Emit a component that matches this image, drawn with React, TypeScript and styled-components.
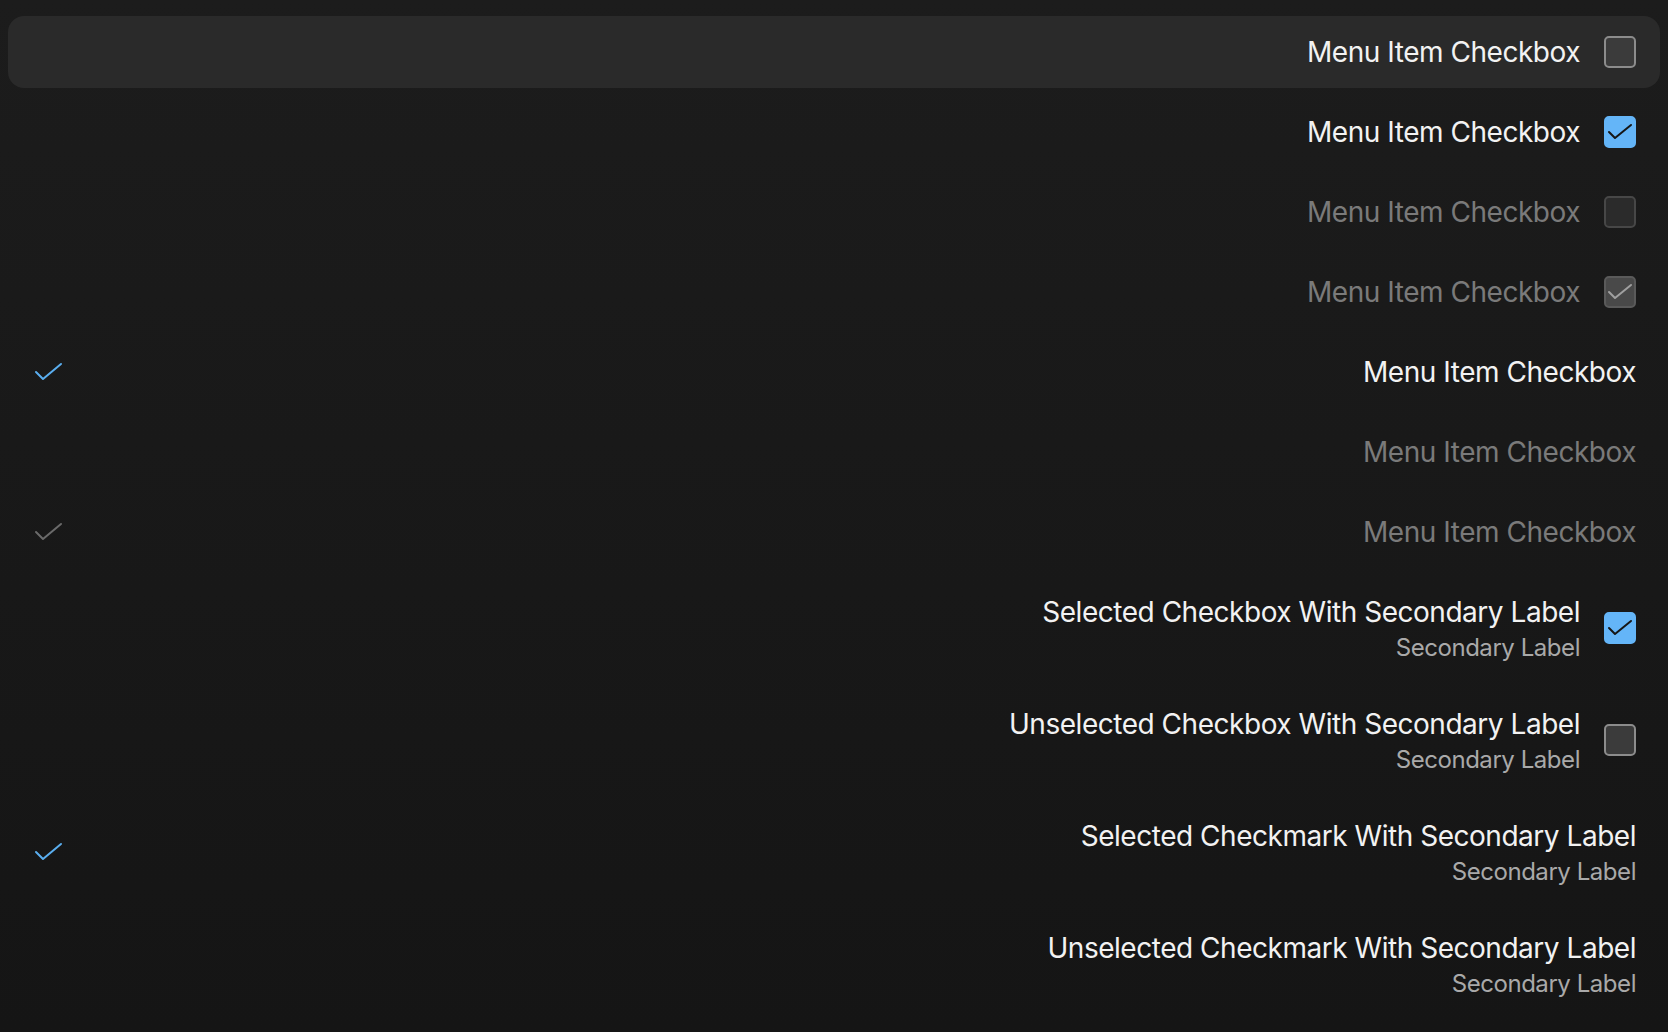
import styled, { createGlobalStyle } from 'styled-components';

const GlobalStyle = createGlobalStyle`
  html, body {
    margin: 0;
    padding: 0;
    background: #181818;
  }
  body {
    font-family: Inter, "Noto Sans", sans-serif;
  }
`

const Page = styled.div`
    min-height: 1032px;
    box-sizing: border-box;
    padding: 16px 8px;
    display: flex;
    flex-direction: column;
    gap: 8px;
    background: linear-gradient(180deg, #1c1c1c 0%, #151515 100%);
`
const Row = styled.div<{ $highlighted?: boolean }>`
    display: flex;
    align-items: center;
    justify-content: space-between;
    padding: 16px 24px;
    border-radius: 16px;
    background: ${p => p.$highlighted ? '#2a2a2a' : 'transparent'};
`
const Lead = styled.div`
    width: 32px;
    height: 32px;
    display: flex;
    align-items: center;
    justify-content: center;
`
const Trail = styled.div`
    display: flex;
    align-items: center;
    gap: 24px;
`
const Labels = styled.div`
    display: flex;
    flex-direction: column;
    align-items: flex-end;
`
const Primary = styled.span<{ $disabled?: boolean }>`
    font-size: 28px;
    line-height: 40px;
    letter-spacing: -0.47px;
    color: ${p => p.$disabled ? '#7a7a7a' : '#f2f2f2'};
    white-space: nowrap;
`
const Secondary = styled.span`
    font-size: 24px;
    line-height: 32px;
    letter-spacing: -0.45px;
    color: #a9a9a9;
    white-space: nowrap;
`
const Box = styled.div<{ $checked?: boolean; $disabled?: boolean }>`
    position: relative;
    width: 32px;
    height: 32px;
    box-sizing: border-box;
    border-radius: 5px;
    border: 2px solid ${p => p.$checked ? (p.$disabled ? '#5a5a5a' : '#64b5f8') : (p.$disabled ? '#474747' : '#8c8c8c')};
    background: ${p => p.$checked ? (p.$disabled ? '#494949' : '#64b5f8') : (p.$disabled ? '#2b2b2b' : '#3b3b3b')};
`
const BoxGlyph = styled.svg`
    position: absolute;
    left: -2px;
    top: -2px;
`

const BoxCheck = ({ color }: { color: string }) => (
    <BoxGlyph width="32" height="32" viewBox="0 0 32 32" fill="none">
        <path d="M5 16 L11 22 L27 9" stroke={color} strokeWidth="2" strokeLinecap="round" strokeLinejoin="round" />
    </BoxGlyph>
)

const Checkmark = ({ color }: { color: string }) => (
    <svg width="32" height="32" viewBox="0 0 32 32" fill="none">
        <path d="M4 16 L11 23 L29 8" stroke={color} strokeWidth="2" strokeLinecap="round" strokeLinejoin="round" />
    </svg>
)

const Checkbox = ({ checked, disabled }: { checked?: boolean; disabled?: boolean }) => (
    <Box $checked={checked} $disabled={disabled}>
        {checked && <BoxCheck color={disabled ? '#a0a0a0' : '#161616'} />}
    </Box>
)

type Item = {
    label: string;
    secondary?: string;
    kind: 'checkbox' | 'checkmark';
    checked?: boolean;
    disabled?: boolean;
    highlighted?: boolean;
}

const items: Item[] = [
    { label: 'Menu Item Checkbox', kind: 'checkbox', highlighted: true },
    { label: 'Menu Item Checkbox', kind: 'checkbox', checked: true },
    { label: 'Menu Item Checkbox', kind: 'checkbox', disabled: true },
    { label: 'Menu Item Checkbox', kind: 'checkbox', checked: true, disabled: true },
    { label: 'Menu Item Checkbox', kind: 'checkmark', checked: true },
    { label: 'Menu Item Checkbox', kind: 'checkmark', disabled: true },
    { label: 'Menu Item Checkbox', kind: 'checkmark', checked: true, disabled: true },
    { label: 'Selected Checkbox With Secondary Label', secondary: 'Secondary Label', kind: 'checkbox', checked: true },
    { label: 'Unselected Checkbox With Secondary Label', secondary: 'Secondary Label', kind: 'checkbox' },
    { label: 'Selected Checkmark With Secondary Label', secondary: 'Secondary Label', kind: 'checkmark', checked: true },
    { label: 'Unselected Checkmark With Secondary Label', secondary: 'Secondary Label', kind: 'checkmark' },
]

export default function App() {
    return (
        <>
            <GlobalStyle />
            <Page>
                {items.map((item, i) => (
                    <Row key={i} $highlighted={item.highlighted}>
                        <Lead>
                            {item.kind === 'checkmark' && item.checked && (
                                <Checkmark color={item.disabled ? '#6a6a6a' : '#5aaeef'} />
                            )}
                        </Lead>
                        <Trail>
                            <Labels>
                                <Primary $disabled={item.disabled}>{item.label}</Primary>
                                {item.secondary && <Secondary>{item.secondary}</Secondary>}
                            </Labels>
                            {item.kind === 'checkbox' && <Checkbox checked={item.checked} disabled={item.disabled} />}
                        </Trail>
                    </Row>
                ))}
            </Page>
        </>
    );
}
